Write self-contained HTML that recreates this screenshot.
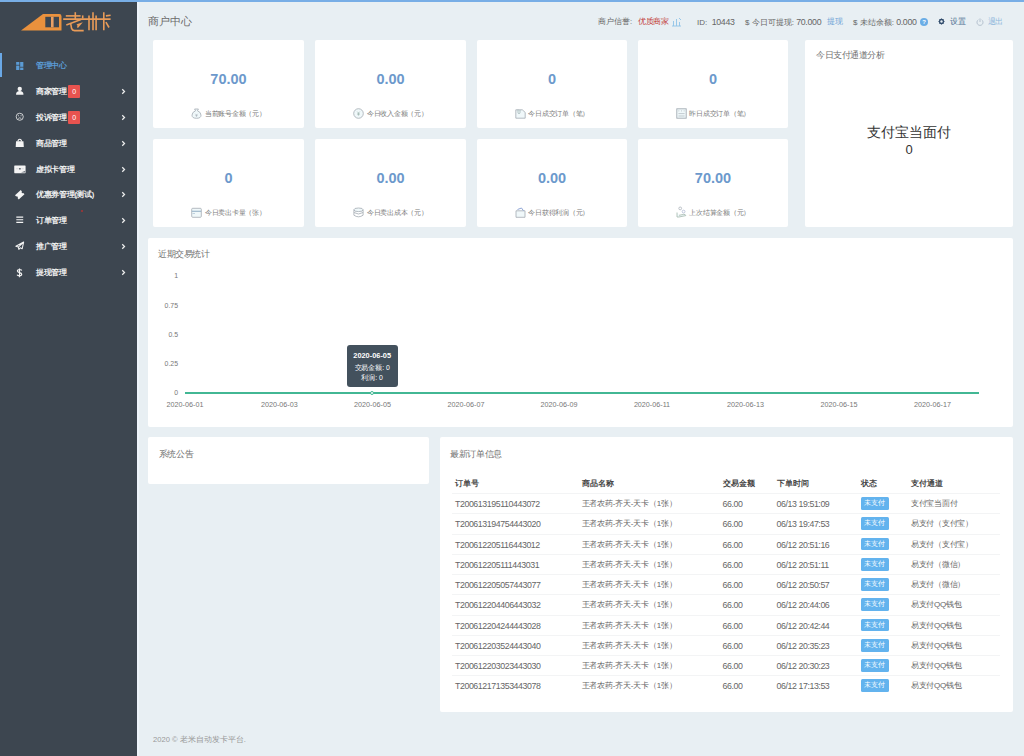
<!DOCTYPE html>
<html><head><meta charset="utf-8">
<style>
*{margin:0;padding:0;box-sizing:border-box}
html,body{width:1024px;height:756px;overflow:hidden}
body{position:relative;background:#e8eff3;font-family:"Liberation Sans",sans-serif;color:#666}
.abs{position:absolute}
#topline{position:absolute;left:0;top:0;width:1024px;height:2px;background:#78aee6}
#side{position:absolute;left:0;top:2px;width:137px;height:754px;background:#3d4650}
#sideedge{position:absolute;left:137px;top:2px;width:1.5px;height:754px;background:#eef4fb}
.mi{position:absolute;left:0;width:137px;height:20px;color:#f2f2f2;font-size:7.6px;letter-spacing:-0.35px;font-weight:bold;line-height:20px}
.mi .ic{position:absolute;left:15px;top:4.2px;width:9.5px;height:9.5px}
.mi .tx{position:absolute;left:36px;top:0}
.mi .chev{position:absolute;left:120.8px;top:5.7px;width:5px;height:7px}
.badge{position:absolute;left:68px;top:3px;width:12px;height:13px;background:#e8534f;color:#fff;font-size:7px;line-height:13px;text-align:center;font-weight:normal;border-radius:1px}
.card{position:absolute;background:#fff;border-radius:2px}
.num{position:absolute;left:0;width:100%;text-align:center;font-weight:bold;color:#6c99cc;font-size:14.5px;line-height:16px}
.lbl{position:absolute;left:0;width:100%;height:11px;display:flex;justify-content:center;align-items:center;color:#7a7a7a;font-size:6.8px;letter-spacing:-0.25px;line-height:11px;white-space:nowrap}
.lbl svg{display:block;margin-right:2.3px;flex:none}
.ptitle{position:absolute;left:11px;color:#717171;font-size:8.6px;line-height:12px;white-space:nowrap}
.dg{font-size:8.8px;letter-spacing:-0.3px}
.hd{position:absolute;top:15.5px;font-size:7.6px;line-height:12px;color:#666;white-space:nowrap}
.yl{position:absolute;width:30px;text-align:right;font-size:6.9px;color:#777;line-height:8px}
.xl{position:absolute;width:60px;text-align:center;font-size:7.2px;color:#777;line-height:8px}
.th{position:absolute;margin-top:0.8px;font-size:7.6px;font-weight:bold;color:#444;line-height:10px;white-space:nowrap}
.td{position:absolute;margin-top:0.5px;font-size:8px;color:#666;line-height:10px;white-space:nowrap}
.st{position:absolute;width:28px;height:12.6px;margin-top:-0.3px;background:#63b3ee;color:#fff;font-size:7px;line-height:12.6px;text-align:center;border-radius:1.5px}
.rl{position:absolute;left:452px;width:548px;height:1px;background:#f3f4f5}
</style></head><body>
<div id="topline"></div>
<div id="side"></div>
<div id="sideedge"></div>

<!-- logo -->
<svg class="abs" style="left:0;top:0" width="137" height="40" viewBox="0 0 137 40">
  <path d="M21 30.5 L43 14.1 H59.5 Q61.5 14.1 61.5 16.5 V30.5 Z" fill="#ea913d"/>
  <rect x="45.3" y="16.8" width="13.7" height="10.5" fill="#3d4650"/>
  <rect x="51" y="16.8" width="2.6" height="10.5" fill="#e9a066"/>
  <g stroke="#e99b58" stroke-width="1.6" fill="none" stroke-linecap="butt">
    <path d="M65.8 15.9 H80.6"/>
    <path d="M75.3 12.2 V19"/>
    <path d="M63.2 19.1 H110.6"/>
    <path d="M82.7 15.4 V18.5"/>
    <path d="M81 19.6 L66.3 24.9"/>
    <path d="M70.6 23.2 L71.6 28.6 Q72.2 30.6 74.5 30.6 H83.7"/>
    <path d="M76.9 25 L80.4 23.9 L77.4 27.4"/>
    <path d="M89 15.6 V30.2"/>
    <path d="M93 12.2 V30.2"/>
    <path d="M96.1 15.6 V30.2"/>
    <path d="M103.8 12.2 V30.2"/>
    <path d="M105.9 15.9 L110.6 15.3"/>
    <path d="M105.9 22.2 L109 27.5"/>
  </g>
</svg>

<div style="position:absolute;left:0;top:53px;width:2px;height:24px;background:#6aa8e6"></div>

<div class="mi" style="top:56px;color:#5b9bd5">
  <svg class="ic" viewBox="0 0 9 10" style="left:16px;top:6px;width:7.5px;height:8px"><rect x="0" y="0" width="4" height="3.5" fill="#5b9bd5"/><rect x="5" y="0" width="4" height="6" fill="#5b9bd5"/><rect x="0" y="4.5" width="4" height="5.5" fill="#5b9bd5"/><rect x="5" y="7" width="4" height="3" fill="#5b9bd5"/></svg>
  <span class="tx">管理中心</span>
</div>

<div class="mi" style="top:82px">
  <svg class="ic" viewBox="0 0 11 10"><circle cx="5.5" cy="3" r="2.5" fill="#f4f4f4"/><path d="M1.2 9.6 Q1.2 5.4 5.5 5.4 Q9.8 5.4 9.8 9.6 Z" fill="#f4f4f4"/></svg>
  <span class="tx">商家管理</span><span class="badge">0</span>
  <svg class="chev" viewBox="0 0 6 8"><path d="M1.5 1.3 L4.2 4 L1.5 6.7" stroke="#eee" stroke-width="1.5" fill="none"/></svg>
</div>

<div class="mi" style="top:108px">
  <svg class="ic" viewBox="0 0 11 10"><circle cx="5.5" cy="5" r="4.1" stroke="#f4f4f4" stroke-width="0.9" fill="none"/><circle cx="4" cy="3.8" r="0.6" fill="#f4f4f4"/><circle cx="7" cy="3.8" r="0.6" fill="#f4f4f4"/><path d="M3.7 7 Q5.5 5.4 7.3 7" stroke="#f4f4f4" stroke-width="0.8" fill="none"/></svg>
  <span class="tx">投诉管理</span><span class="badge">0</span>
  <svg class="chev" viewBox="0 0 6 8"><path d="M1.5 1.3 L4.2 4 L1.5 6.7" stroke="#eee" stroke-width="1.5" fill="none"/></svg>
</div>

<div class="mi" style="top:134px">
  <svg class="ic" viewBox="0 0 11 10"><path d="M3.4 3.6 Q3.6 0.9 5.5 0.9 Q7.4 0.9 7.6 3.6" stroke="#f4f4f4" stroke-width="1.3" fill="none"/><path d="M1.2 3.2 H9.8 L10.2 10 H0.8 Z" fill="#f4f4f4"/></svg>
  <span class="tx">商品管理</span>
  <svg class="chev" viewBox="0 0 6 8"><path d="M1.5 1.3 L4.2 4 L1.5 6.7" stroke="#eee" stroke-width="1.5" fill="none"/></svg>
</div>

<div class="mi" style="top:160px">
  <svg class="ic" viewBox="0 0 13 10" style="left:13.8px;width:12.2px;top:4.8px;height:9.3px"><rect x="0.2" y="0.5" width="12.2" height="8.3" rx="0.6" fill="#f4f4f4"/><path d="M2 4 H5 M8 4 H10.5" stroke="#c5c9cd" stroke-width="0.6"/><circle cx="6.3" cy="4" r="0.9" fill="#3d4650"/><path d="M7.5 8 L12 6.3 V8 Z" fill="#707880"/></svg>
  <span class="tx">虚拟卡管理</span>
  <svg class="chev" viewBox="0 0 6 8"><path d="M1.5 1.3 L4.2 4 L1.5 6.7" stroke="#eee" stroke-width="1.5" fill="none"/></svg>
</div>

<div class="mi" style="top:185px">
  <svg class="ic" viewBox="0 0 11 10" style="top:5.2px"><g transform="rotate(-42 5.5 5)"><path d="M1 1.8 H10 V3.8 A1.2 1.2 0 0 0 10 6.2 V8.2 H1 V6.2 A1.2 1.2 0 0 0 1 3.8 Z" fill="#f4f4f4"/></g></svg>
  <span class="tx">优惠券管理(测试)</span>
  <svg class="chev" viewBox="0 0 6 8"><path d="M1.5 1.3 L4.2 4 L1.5 6.7" stroke="#eee" stroke-width="1.5" fill="none"/></svg>
</div>
<div style="position:absolute;left:81px;top:210px;width:2px;height:2px;background:#a33;border-radius:1px"></div>

<div class="mi" style="top:211px">
  <svg class="ic" viewBox="0 0 11 10"><path d="M1.5 2 H9.5 M1.5 5 H9.5 M1.5 8 H9.5" stroke="#f4f4f4" stroke-width="1.3"/></svg>
  <span class="tx">订单管理</span>
  <svg class="chev" viewBox="0 0 6 8"><path d="M1.5 1.3 L4.2 4 L1.5 6.7" stroke="#eee" stroke-width="1.5" fill="none"/></svg>
</div>

<div class="mi" style="top:237px">
  <svg class="ic" viewBox="0 0 11 10"><path d="M10 0.7 L1 5.5 L3.8 6.5 L4.5 9.3 L6 7.3 L8.3 8.5 Z M3.8 6.5 L10 0.7" stroke="#f4f4f4" stroke-width="1.2" fill="none" stroke-linejoin="round"/></svg>
  <span class="tx">推广管理</span>
  <svg class="chev" viewBox="0 0 6 8"><path d="M1.5 1.3 L4.2 4 L1.5 6.7" stroke="#eee" stroke-width="1.5" fill="none"/></svg>
</div>

<div class="mi" style="top:263px">
  <svg class="ic" viewBox="0 0 8 10" style="left:16px;top:5px;width:7px;height:9.5px"><path d="M6.6 2.4 Q6 1.3 4 1.3 Q1.6 1.3 1.6 3 Q1.6 4.3 4 4.8 Q6.5 5.3 6.5 6.8 Q6.5 8.6 4 8.6 Q1.8 8.6 1.2 7.4 M4 0 V10" stroke="#f4f4f4" stroke-width="1.35" fill="none"/></svg>
  <span class="tx">提现管理</span>
  <svg class="chev" viewBox="0 0 6 8"><path d="M1.5 1.3 L4.2 4 L1.5 6.7" stroke="#eee" stroke-width="1.5" fill="none"/></svg>
</div>


<!-- header -->
<div class="abs" style="left:148px;top:13.5px;font-size:11px;line-height:14px;color:#6a6a6a">商户中心</div>


<!-- top right header -->
<div class="hd" style="left:598px;color:#666">商户信誉:</div>
<div class="hd" style="left:638px;color:#c23a36;letter-spacing:-0.4px">优质商家</div>
<svg class="abs" style="left:671px;top:16.5px" width="11" height="10" viewBox="0 0 11 10"><path d="M1 9 H10 M2.5 9 V4 M5.5 9 V2 M8.5 9 V5 M8 1 L10 3" stroke="#8fc3e8" stroke-width="0.9" fill="none"/></svg>
<div class="hd" style="left:697px;font-size:8px">ID:&nbsp; <span class="dg">10443</span></div>
<div class="hd" style="left:745px;font-size:8px">$ 今日可提现:&nbsp;<span class="dg">70.000</span></div>
<div class="hd" style="left:827px;color:#6fa3d6;letter-spacing:-0.4px">提现</div>
<div class="hd" style="left:853px;font-size:8px">$ 未结余额:&nbsp;<span class="dg">0.000</span></div>
<div class="abs" style="left:920px;top:17.5px;width:8px;height:8px;border-radius:50%;background:#6aade6;color:#fff;font-size:6px;line-height:8px;text-align:center;font-weight:bold">?</div>
<svg class="abs" style="left:938px;top:17.5px" width="7" height="7" viewBox="0 0 10 10"><path d="M5 0.3 L6.2 1.6 L8.3 1.7 L8.4 3.8 L9.7 5 L8.4 6.2 L8.3 8.3 L6.2 8.4 L5 9.7 L3.8 8.4 L1.7 8.3 L1.6 6.2 L0.3 5 L1.6 3.8 L1.7 1.7 L3.8 1.6 Z" fill="#2f4a6a"/><circle cx="5" cy="5" r="1.7" fill="#e8eff3"/></svg>
<div class="hd" style="left:950px;color:#4f6f92">设置</div>
<svg class="abs" style="left:976px;top:17.5px" width="8" height="8" viewBox="0 0 10 10"><path d="M3 2.2 A3.8 3.8 0 1 0 7 2.2" stroke="#a9b8c6" stroke-width="1" fill="none"/><path d="M5 0.5 V5" stroke="#a9b8c6" stroke-width="1"/></svg>
<div class="hd" style="left:988px;color:#8fb8dc;letter-spacing:-1px">退出</div>

<!-- cards -->
<div class="card" style="left:153px;top:40px;width:151px;height:88px"><div class="num" style="top:31px">70.00</div><div class="lbl" style="top:67.5px"><svg width="11" height="11" viewBox="0 0 11 11"><path d="M3.6 1 H7.4 L6.5 2.8 Q10 4.2 10 7.2 Q10 10.3 5.5 10.3 Q1 10.3 1 7.2 Q1 4.2 4.5 2.8 Z" stroke="#a3abb3" stroke-width="0.8" fill="#f0f8fa"/><path d="M4.3 5.8 L5.5 7 L6.7 5.8 M5.5 7 V8.8 M4.4 7.6 H6.6" stroke="#a3abb3" stroke-width="0.6" fill="none"/></svg><span>当前账号金额（元）</span></div></div>
<div class="card" style="left:315px;top:40px;width:151px;height:88px"><div class="num" style="top:31px">0.00</div><div class="lbl" style="top:67.5px"><svg width="11" height="11" viewBox="0 0 11 11"><circle cx="5.5" cy="5.5" r="4.8" stroke="#a3abb3" stroke-width="0.8" fill="#f0f8fa"/><path d="M4.2 3.6 L5.5 5 L6.8 3.6 M5.5 5 V7.6 M4.3 5.6 H6.7 M4.3 6.6 H6.7" stroke="#99b0aa" stroke-width="0.6" fill="none"/></svg><span>今日收入金额（元）</span></div></div>
<div class="card" style="left:477px;top:40px;width:150px;height:88px"><div class="num" style="top:31px">0</div><div class="lbl" style="top:67.5px"><svg width="11" height="11" viewBox="0 0 11 11"><path d="M0.8 1.8 H7.3 L10.2 4.4 V10.2 H0.8 Z" stroke="#a3abb3" stroke-width="0.8" fill="#f0f8fa"/><path d="M3 1.5 V4.5 Q3 5.6 4 5.6 Q5 5.6 5 4.5 V2" stroke="#9fb4b4" stroke-width="0.8" fill="none"/></svg><span>今日成交订单（笔）</span></div></div>
<div class="card" style="left:638px;top:40px;width:150px;height:88px"><div class="num" style="top:31px">0</div><div class="lbl" style="top:67.5px"><svg width="11" height="11" viewBox="0 0 11 11"><rect x="0.8" y="0.8" width="9.4" height="9.4" stroke="#a3abb3" stroke-width="0.9" fill="#f0f8fa"/><path d="M2.8 2.4 V3.4 M5.5 2.4 V3.4 M8.2 2.4 V3.4 M2.4 5.6 H8.6 M2.4 8 H8.6" stroke="#a3abb3" stroke-width="0.6"/></svg><span>昨日成交订单（笔）</span></div></div>
<div class="card" style="left:153px;top:139px;width:151px;height:88px"><div class="num" style="top:31px">0</div><div class="lbl" style="top:67.5px"><svg width="11" height="11" viewBox="0 0 11 11"><rect x="0.7" y="1.3" width="9.6" height="9" rx="1" stroke="#a3abb3" stroke-width="0.8" fill="#f0f8fa"/><path d="M0.8 4.3 H10.2" stroke="#9fb8cc" stroke-width="1.2"/><path d="M1.5 6.5 H4" stroke="#9fb8cc" stroke-width="0.6"/></svg><span>今日卖出卡量（张）</span></div></div>
<div class="card" style="left:315px;top:139px;width:151px;height:88px"><div class="num" style="top:31px">0.00</div><div class="lbl" style="top:67.5px"><svg width="11" height="11" viewBox="0 0 11 11"><ellipse cx="5.5" cy="2.8" rx="4.6" ry="1.8" stroke="#a3abb3" stroke-width="0.8" fill="#f0f8fa"/><path d="M0.9 2.8 V8.2 Q5.5 11.4 10.1 8.2 V2.8 M0.9 5.5 Q5.5 8.5 10.1 5.5" stroke="#a3abb3" stroke-width="0.8" fill="none"/></svg><span>今日卖出成本（元）</span></div></div>
<div class="card" style="left:477px;top:139px;width:150px;height:88px"><div class="num" style="top:31px">0.00</div><div class="lbl" style="top:67.5px"><svg width="11" height="11" viewBox="0 0 11 11"><path d="M1 3.8 H10 V10.3 H1 Z" stroke="#a3abb3" stroke-width="0.8" fill="#f0f8fa"/><path d="M2.5 2.5 L6.5 1 L8.5 3.8" stroke="#8fa6d6" stroke-width="1" fill="none"/></svg><span>今日获得利润（元）</span></div></div>
<div class="card" style="left:638px;top:139px;width:150px;height:88px"><div class="num" style="top:31px">70.00</div><div class="lbl" style="top:67.5px"><svg width="11" height="12" viewBox="0 0 11 12"><circle cx="4.2" cy="2.4" r="1.4" stroke="#a3abb3" stroke-width="0.7" fill="none"/><circle cx="7.6" cy="5.6" r="1.4" stroke="#a9b2d0" stroke-width="0.7" fill="none"/><path d="M1 6.5 V11 H3 L9.8 9.6 Q9.5 8 7.5 8.4 L3 9.3" stroke="#a3b8ac" stroke-width="0.8" fill="#f0f8fa"/></svg><span>上次结算金额（元）</span></div></div>
<!-- right panel -->
<div class="card" style="left:805px;top:40px;width:208px;height:187px">
  <div class="ptitle" style="top:9px;letter-spacing:-0.5px">今日支付通道分析</div>
  <div class="abs" style="left:0;top:83.5px;width:100%;text-align:center;font-size:13.6px;line-height:17px;color:#333">支付宝当面付</div>
  <div class="abs" style="left:0;top:102px;width:100%;text-align:center;font-size:13px;line-height:16px;color:#333">0</div>
</div>
<!-- chart panel -->
<div class="card" style="left:148px;top:238px;width:865px;height:189px"></div>
<div class="ptitle" style="left:158px;top:248px;letter-spacing:-0.38px">近期交易统计</div>
<div class="yl" style="left:148px;top:272px">1</div>
<div class="yl" style="left:148px;top:301.5px">0.75</div>
<div class="yl" style="left:148px;top:330.5px">0.5</div>
<div class="yl" style="left:148px;top:360px">0.25</div>
<div class="yl" style="left:148px;top:389px">0</div>
<div class="xl" style="left:155px;top:401px">2020-06-01</div>
<div class="xl" style="left:249.3px;top:401px">2020-06-03</div>
<div class="xl" style="left:342.5px;top:401px">2020-06-05</div>
<div class="xl" style="left:436px;top:401px">2020-06-07</div>
<div class="xl" style="left:529px;top:401px">2020-06-09</div>
<div class="xl" style="left:622px;top:401px">2020-06-11</div>
<div class="xl" style="left:715.5px;top:401px">2020-06-13</div>
<div class="xl" style="left:809px;top:401px">2020-06-15</div>
<div class="xl" style="left:902.5px;top:401px">2020-06-17</div>
<div class="abs" style="left:185px;top:391.5px;width:794px;height:2.2px;background:#42b794"></div>
<div class="abs" style="left:370px;top:390.5px;width:4px;height:4px;border-radius:50%;background:#fff;border:0.8px solid #42b794"></div>
<div class="abs" style="left:346.7px;top:344.7px;width:51px;height:42.6px;background:#43515d;border-radius:3px;color:#fff;text-align:center">
  <div style="position:absolute;left:0;top:6.5px;width:100%;font-size:7.4px;font-weight:bold;line-height:9px">2020-06-05</div>
  <div style="position:absolute;left:0;top:18.2px;width:100%;font-size:6.9px;letter-spacing:-0.05px;line-height:9px">交易金额: 0</div>
  <div style="position:absolute;left:0;top:28px;width:100%;font-size:6.9px;letter-spacing:-0.05px;line-height:9px">利润: 0</div>
</div>
<!-- notice -->
<div class="card" style="left:148px;top:437px;width:281px;height:47px"></div>
<div class="ptitle" style="left:158.8px;top:447.5px;letter-spacing:-0.35px">系统公告</div>
<!-- table -->
<div class="card" style="left:440px;top:437px;width:573px;height:275px"></div>
<div class="ptitle" style="left:450px;top:448px;letter-spacing:-0.33px">最新订单信息</div>
<div class="th" style="left:455px;top:478px">订单号</div>
<div class="th" style="left:581.5px;top:478px">商品名称</div>
<div class="th" style="left:722.5px;top:478px">交易金额</div>
<div class="th" style="left:776.5px;top:478px">下单时间</div>
<div class="th" style="left:860.5px;top:478px">状态</div>
<div class="th" style="left:911px;top:478px">支付通道</div>
<div class="rl" style="top:493.00px"></div>
<div class="td" style="left:455px;top:498.50px;font-size:8.8px;letter-spacing:-0.42px">T200613195110443072</div><div class="td" style="left:581.5px;top:498.50px;letter-spacing:-0.2px">王者农药-齐天-天卡（1张）</div><div class="td" style="left:722.5px;top:498.50px;font-size:8.8px;letter-spacing:-0.42px">66.00</div><div class="td" style="left:776.5px;top:498.50px;font-size:8.8px;letter-spacing:-0.42px">06/13 19:51:09</div><div class="st" style="left:860.5px;top:497.50px">未支付</div><div class="td" style="left:911px;top:498.50px;letter-spacing:-0.3px">支付宝当面付</div>
<div class="rl" style="top:513.25px"></div>
<div class="td" style="left:455px;top:518.75px;font-size:8.8px;letter-spacing:-0.42px">T200613194754443020</div><div class="td" style="left:581.5px;top:518.75px;letter-spacing:-0.2px">王者农药-齐天-天卡（1张）</div><div class="td" style="left:722.5px;top:518.75px;font-size:8.8px;letter-spacing:-0.42px">66.00</div><div class="td" style="left:776.5px;top:518.75px;font-size:8.8px;letter-spacing:-0.42px">06/13 19:47:53</div><div class="st" style="left:860.5px;top:517.75px">未支付</div><div class="td" style="left:911px;top:518.75px;letter-spacing:-0.3px">易支付（支付宝）</div>
<div class="rl" style="top:533.50px"></div>
<div class="td" style="left:455px;top:539.00px;font-size:8.8px;letter-spacing:-0.42px">T200612205116443012</div><div class="td" style="left:581.5px;top:539.00px;letter-spacing:-0.2px">王者农药-齐天-天卡（1张）</div><div class="td" style="left:722.5px;top:539.00px;font-size:8.8px;letter-spacing:-0.42px">66.00</div><div class="td" style="left:776.5px;top:539.00px;font-size:8.8px;letter-spacing:-0.42px">06/12 20:51:16</div><div class="st" style="left:860.5px;top:538.00px">未支付</div><div class="td" style="left:911px;top:539.00px;letter-spacing:-0.3px">易支付（支付宝）</div>
<div class="rl" style="top:553.75px"></div>
<div class="td" style="left:455px;top:559.25px;font-size:8.8px;letter-spacing:-0.42px">T200612205111443031</div><div class="td" style="left:581.5px;top:559.25px;letter-spacing:-0.2px">王者农药-齐天-天卡（1张）</div><div class="td" style="left:722.5px;top:559.25px;font-size:8.8px;letter-spacing:-0.42px">66.00</div><div class="td" style="left:776.5px;top:559.25px;font-size:8.8px;letter-spacing:-0.42px">06/12 20:51:11</div><div class="st" style="left:860.5px;top:558.25px">未支付</div><div class="td" style="left:911px;top:559.25px;letter-spacing:-0.3px">易支付（微信）</div>
<div class="rl" style="top:574.00px"></div>
<div class="td" style="left:455px;top:579.50px;font-size:8.8px;letter-spacing:-0.42px">T200612205057443077</div><div class="td" style="left:581.5px;top:579.50px;letter-spacing:-0.2px">王者农药-齐天-天卡（1张）</div><div class="td" style="left:722.5px;top:579.50px;font-size:8.8px;letter-spacing:-0.42px">66.00</div><div class="td" style="left:776.5px;top:579.50px;font-size:8.8px;letter-spacing:-0.42px">06/12 20:50:57</div><div class="st" style="left:860.5px;top:578.50px">未支付</div><div class="td" style="left:911px;top:579.50px;letter-spacing:-0.3px">易支付（微信）</div>
<div class="rl" style="top:594.25px"></div>
<div class="td" style="left:455px;top:599.75px;font-size:8.8px;letter-spacing:-0.42px">T200612204406443032</div><div class="td" style="left:581.5px;top:599.75px;letter-spacing:-0.2px">王者农药-齐天-天卡（1张）</div><div class="td" style="left:722.5px;top:599.75px;font-size:8.8px;letter-spacing:-0.42px">66.00</div><div class="td" style="left:776.5px;top:599.75px;font-size:8.8px;letter-spacing:-0.42px">06/12 20:44:06</div><div class="st" style="left:860.5px;top:598.75px">未支付</div><div class="td" style="left:911px;top:599.75px;letter-spacing:-0.3px">易支付QQ钱包</div>
<div class="rl" style="top:614.50px"></div>
<div class="td" style="left:455px;top:620.00px;font-size:8.8px;letter-spacing:-0.42px">T200612204244443028</div><div class="td" style="left:581.5px;top:620.00px;letter-spacing:-0.2px">王者农药-齐天-天卡（1张）</div><div class="td" style="left:722.5px;top:620.00px;font-size:8.8px;letter-spacing:-0.42px">66.00</div><div class="td" style="left:776.5px;top:620.00px;font-size:8.8px;letter-spacing:-0.42px">06/12 20:42:44</div><div class="st" style="left:860.5px;top:619.00px">未支付</div><div class="td" style="left:911px;top:620.00px;letter-spacing:-0.3px">易支付QQ钱包</div>
<div class="rl" style="top:634.75px"></div>
<div class="td" style="left:455px;top:640.25px;font-size:8.8px;letter-spacing:-0.42px">T200612203524443040</div><div class="td" style="left:581.5px;top:640.25px;letter-spacing:-0.2px">王者农药-齐天-天卡（1张）</div><div class="td" style="left:722.5px;top:640.25px;font-size:8.8px;letter-spacing:-0.42px">66.00</div><div class="td" style="left:776.5px;top:640.25px;font-size:8.8px;letter-spacing:-0.42px">06/12 20:35:23</div><div class="st" style="left:860.5px;top:639.25px">未支付</div><div class="td" style="left:911px;top:640.25px;letter-spacing:-0.3px">易支付QQ钱包</div>
<div class="rl" style="top:655.00px"></div>
<div class="td" style="left:455px;top:660.50px;font-size:8.8px;letter-spacing:-0.42px">T200612203023443030</div><div class="td" style="left:581.5px;top:660.50px;letter-spacing:-0.2px">王者农药-齐天-天卡（1张）</div><div class="td" style="left:722.5px;top:660.50px;font-size:8.8px;letter-spacing:-0.42px">66.00</div><div class="td" style="left:776.5px;top:660.50px;font-size:8.8px;letter-spacing:-0.42px">06/12 20:30:23</div><div class="st" style="left:860.5px;top:659.50px">未支付</div><div class="td" style="left:911px;top:660.50px;letter-spacing:-0.3px">易支付QQ钱包</div>
<div class="rl" style="top:675.25px"></div>
<div class="td" style="left:455px;top:680.75px;font-size:8.8px;letter-spacing:-0.42px">T200612171353443078</div><div class="td" style="left:581.5px;top:680.75px;letter-spacing:-0.2px">王者农药-齐天-天卡（1张）</div><div class="td" style="left:722.5px;top:680.75px;font-size:8.8px;letter-spacing:-0.42px">66.00</div><div class="td" style="left:776.5px;top:680.75px;font-size:8.8px;letter-spacing:-0.42px">06/12 17:13:53</div><div class="st" style="left:860.5px;top:679.75px">未支付</div><div class="td" style="left:911px;top:680.75px;letter-spacing:-0.3px">易支付QQ钱包</div>

<div class="abs" style="left:153px;top:735px;font-size:7.6px;line-height:10px;color:#999">2020 © 老米自动发卡平台.</div>
</body></html>
